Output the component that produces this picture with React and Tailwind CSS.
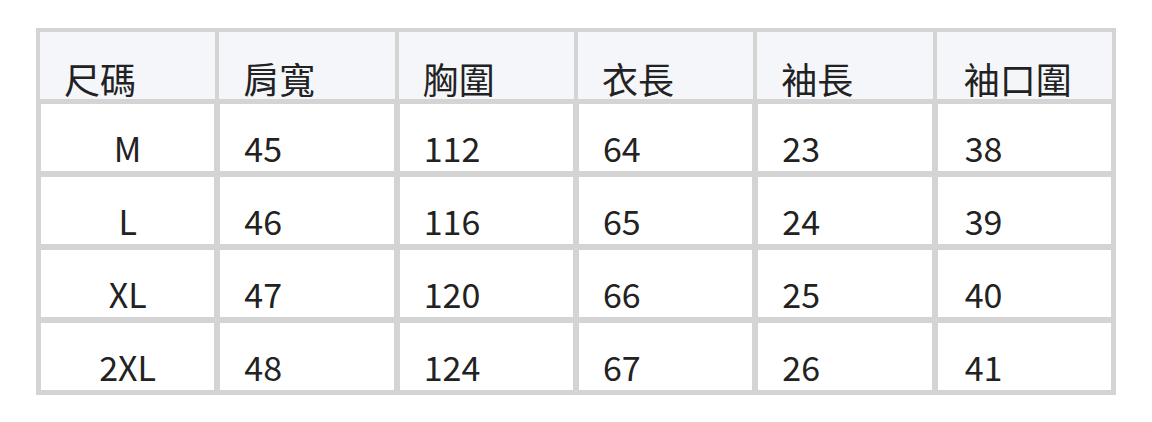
const headers = ['尺碼', '肩寬', '胸圍', '衣長', '袖長', '袖口圍'];

const rows = [
  ['M', '45', '112', '64', '23', '38'],
  ['L', '46', '116', '65', '24', '39'],
  ['XL', '47', '120', '66', '25', '40'],
  ['2XL', '48', '124', '67', '26', '41'],
];

export default function App() {
  return (
    <div className="min-h-[422px] bg-white pt-[28px] pl-[36px] font-['Noto_Sans_CJK_TC','Noto_Sans',sans-serif] text-[#222]">
      <div className="w-[1080px] border-2 border-[#d4d4d4]">
        <div className="grid grid-cols-6">
          {headers.map((h, i) => (
            <div
              key={h}
              className={`h-[71px] border-2 border-[#d4d4d4] bg-[#f5f6fa] flex items-end pb-[3px] text-[36px] leading-none ${
                i === 5 ? 'px-[27px]' : 'px-[24px]'
              }`}
            >
              {h}
            </div>
          ))}
        </div>
        {rows.map((r) => (
          <div key={r[0]} className="grid grid-cols-6">
            {r.map((c, i) => (
              <div
                key={i}
                className={`h-[73px] border-[3px] border-[#d4d4d4] bg-white flex items-end pb-[6px] text-[34px] leading-none ${
                  i === 0 ? 'justify-center' : i === 5 ? 'px-[27px]' : 'px-[24px]'
                }`}
              >
                {c}
              </div>
            ))}
          </div>
        ))}
      </div>
    </div>
  );
}
